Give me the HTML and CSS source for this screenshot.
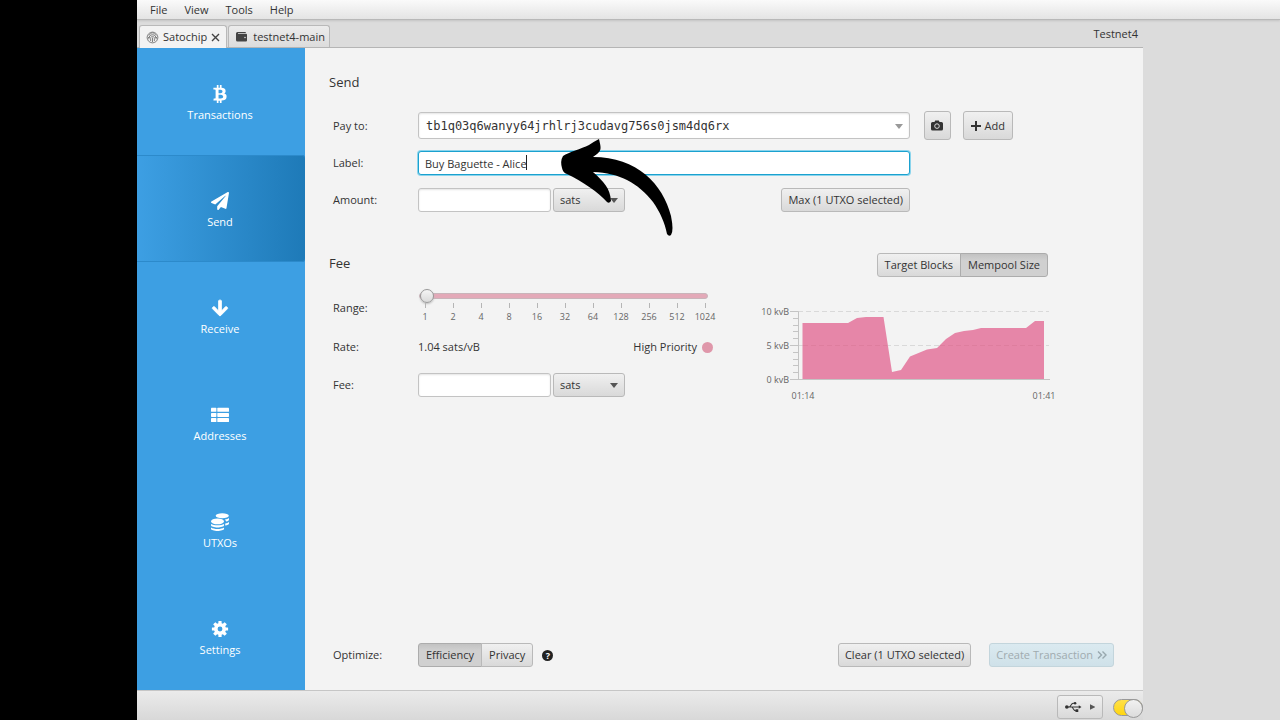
FILE: index.html
```html
<!DOCTYPE html>
<html lang="en">
<head>
<meta charset="utf-8">
<title>Satochip - Send</title>
<link rel="stylesheet" href="styles.css">
</head>
<body>
<div class="app">
  <nav class="menubar" aria-label="Menu">
    <button class="menu-item" type="button">File</button>
    <button class="menu-item" type="button">View</button>
    <button class="menu-item" type="button">Tools</button>
    <button class="menu-item" type="button">Help</button>
  </nav>
  <div class="window">
    <header class="tabs">
      <button class="tab active" type="button">
        <svg class="tab-icon" viewBox="0 0 14 14" aria-hidden="true"><g fill="none" stroke="#777" stroke-width="1"><circle cx="7" cy="7" r="5.8"/><path d="M3 5c1-2 3-3 4-3s3 1 4 3M3 9c0-3 1.500-5 4-5s4 2 4 5M5 11V8c0-3 4-3 4 0v3M7 7v5M2 7h2M10 7h2"/></g></svg>
        <span>Satochip</span>
        <svg class="close" viewBox="0 0 9 9" aria-hidden="true"><path d="M1 1l7 7M8 1L1 8" stroke="#444" stroke-width="1.400"/></svg>
      </button>
      <button class="tab" type="button">
        <svg class="wallet" viewBox="0 0 11 10" aria-hidden="true"><path fill="#444" d="M1.500 0H9a1 1 0 0 1 1 1H2v.7h8a1 1 0 0 1 1 1V8.500a1 1 0 0 1-1 1H1.500A1.500 1.500 0 0 1 0 8V1.500A1.500 1.500 0 0 1 1.500 0z"/><circle cx="9" cy="5.500" r=".8" fill="#ddd"/></svg>
        <span>testnet4-main</span>
      </button>
      <span class="network">Testnet4</span>
    </header>
    <div class="body">
      <nav class="sidebar" aria-label="Wallet">
        <button class="side" type="button">
          <svg viewBox="0 0 384 512" aria-hidden="true"><path d="M310.204 242.638c27.730-14.180 45.377-39.390 41.280-81.300-5.358-57.351-52.458-76.573-114.850-81.929V0h-48.528v77.203c-12.605 0-25.525.315-38.444.630V0h-48.530v79.409c-17.842.539-38.622.276-97.370 0v51.678c38.314-.678 58.417-3.140 63.023 21.427v217.429c-2.925 19.492-18.524 16.685-53.255 16.071L3.765 443.680c88.481 0 97.370.315 97.370.315V512h48.530v-67.060c13.234.315 26.154.315 38.444.315V512h48.528v-68.005c81.299-4.412 135.647-24.894 142.895-101.467 5.671-61.446-23.320-88.862-69.326-99.890zM150.608 134.553c27.415 0 113.126-8.507 113.126 48.528 0 54.515-85.710 48.212-113.126 48.212v-96.740zm0 251.776V279.821c32.772 0 133.127-9.138 133.127 53.255-.001 60.186-100.355 53.253-133.127 53.253z"/></svg>
          <span>Transactions</span>
        </button>
        <button class="side selected" type="button">
          <svg viewBox="0 0 512 512" aria-hidden="true"><path d="M476 3.200L12.500 270.600c-18.100 10.400-15.800 35.600 2.200 43.200L121 358.400l287.300-253.200c5.500-4.900 13.300 2.600 8.600 8.300L176 407v80.500c0 23.600 28.500 32.900 42.500 15.800L282 426l124.600 52.200c14.200 6 30.400-2.900 33-18.200l72-432C515 7.800 493.300-6.800 476 3.200z"/></svg>
          <span>Send</span>
        </button>
        <button class="side" type="button">
          <svg viewBox="0 0 448 512" aria-hidden="true"><path d="M413.100 222.500l22.200 22.200c9.400 9.400 9.400 24.600 0 33.900L241 473c-9.400 9.400-24.600 9.400-33.900 0L12.700 278.600c-9.400-9.400-9.400-24.600 0-33.900l22.200-22.200c9.500-9.500 25-9.300 34.300.4L184 343.400V56c0-13.300 10.700-24 24-24h32c13.300 0 24 10.700 24 24v287.400l114.800-120.500c9.300-9.800 24.800-10 34.300-.4z" stroke="#fff" stroke-width="24"/></svg>
          <span>Receive</span>
        </button>
        <button class="side" type="button">
          <svg viewBox="0 0 20 20" aria-hidden="true"><rect x="0" y="2" width="6" height="4.500" rx=".7"/><rect x="7" y="2" width="13" height="4.500" rx=".7"/><rect x="0" y="7.700" width="6" height="4.500" rx=".7"/><rect x="7" y="7.700" width="13" height="4.500" rx=".7"/><rect x="0" y="13.400" width="6" height="4.500" rx=".7"/><rect x="7" y="13.400" width="13" height="4.500" rx=".7"/></svg>
          <span>Addresses</span>
        </button>
        <button class="side" type="button">
          <svg viewBox="0 0 20 20" aria-hidden="true"><ellipse cx="12.500" cy="3" rx="7.300" ry="2.800"/><path d="M15.500 7.200c2-.3 3.500-.9 4.500-1.700v1.700c0 1-1.200 1.800-3 2.300zM15.800 11.700c1.800-.3 3.200-.9 4.200-1.700v1.600c0 1-1.700 1.900-4.200 2.300z"/><ellipse cx="7.200" cy="9.300" rx="7.200" ry="3.300"/><path d="M0 12.200c3 2 11.500 2 14.500 0v1.500c0 3.200-14.500 3.200-14.500 0zM0 16c3 2.200 11.500 2.200 14.500 0v1.600c0 3.200-14.500 3.200-14.500 0z"/></svg>
          <span>UTXOs</span>
        </button>
        <button class="side" type="button">
          <svg viewBox="0 0 20 20" aria-hidden="true"><circle cx="10" cy="10" r="4.700" fill="none" stroke="#fff" stroke-width="4"/><g id="teeth"><rect x="8.200" y="1" width="3.600" height="4" rx=".5"/><rect x="8.200" y="15" width="3.600" height="4" rx=".5"/><rect x="1" y="8.200" width="4" height="3.600" rx=".5"/><rect x="15" y="8.200" width="4" height="3.600" rx=".5"/></g><use href="#teeth" transform="rotate(45 10 10)"/></svg>
          <span>Settings</span>
        </button>
      </nav>
      <main class="pane">
        <section class="send">
          <h2>Send</h2>
          <div class="row payto">
            <label for="payto">Pay to:</label>
            <div class="combo wide">
              <input id="payto" class="field mono" type="text" value="tb1q03q6wanyy64jrhlrj3cudavg756s0jsm4dq6rx">
            </div>
            <button class="btn tall camera" type="button" aria-label="Scan QR code">
              <svg viewBox="0 0 12 11" width="12" height="11" aria-hidden="true"><path fill="#333" d="M1.500 2h2l.7-1.500h3.600L8.500 2h2A1.500 1.500 0 0 1 12 3.500v5.500a1.500 1.500 0 0 1-1.500 1.500h-9A1.500 1.500 0 0 1 0 9V3.500A1.500 1.500 0 0 1 1.500 2z"/><circle cx="6" cy="6.100" r="2.300" fill="none" stroke="#ddd"/></svg>
            </button>
            <button class="btn tall" type="button">
              <svg viewBox="0 0 10 10" width="10" height="10" aria-hidden="true"><path d="M5 0v10M0 5h10" stroke="#333" stroke-width="2"/></svg>
              Add
            </button>
          </div>
          <div class="row narrow">
            <label for="label">Label:</label>
            <div class="wide">
              <input id="label" class="field focused" type="text" value="Buy Baguette - Alice">
              <span class="caret"></span>
            </div>
          </div>
          <div class="row narrow">
            <label for="amount">Amount:</label>
            <input id="amount" class="field amount" type="text">
            <div class="combo unit"><select class="btn" aria-label="Amount unit"><option>sats</option><option>BTC</option></select></div>
            <button class="btn push" type="button">Max (1 UTXO selected)</button>
          </div>
          <svg class="pointer" viewBox="560 138 114 99" aria-hidden="true"><path d="M599 139C600 144 602 149 599 152C598 154 595 155 593 157C637 157 663 184 671 216Q674 231 671 235Q669 237 667 234C665 223 660 212 653 202C638 183 620 173 593 172C604 182 610 188 611 201Q609 204 607 202C598 192 583 182 567 174Q563 173 562 168Q560 161 563 156C569 152 581 149 589 145Q595 141 599 139Z"/></svg>
        </section>
        <section class="fee">
          <div class="fee-head">
            <h2>Fee</h2>
            <div class="group"><button class="btn" type="button">Target Blocks</button><button class="btn on" type="button" aria-pressed="true">Mempool Size</button></div>
          </div>
          <div class="fee-body">
            <div class="fee-form">
              <div class="row range-row">
                <label for="range">Range:</label>
                <div class="slider">
                  <input id="range" type="range" min="0" max="10" value="0">
                  <div class="ticks"><span>1</span><span>2</span><span>4</span><span>8</span><span>16</span><span>32</span><span>64</span><span>128</span><span>256</span><span>512</span><span>1024</span></div>
                </div>
              </div>
              <div class="row rate">
                <span class="caption">Rate:</span>
                <span>1.04 sats/vB</span>
                <span class="priority push">High Priority <i class="dot"></i></span>
              </div>
              <div class="row">
                <label for="fee">Fee:</label>
                <input id="fee" class="field amount" type="text">
                <div class="combo unit"><select class="btn" aria-label="Fee unit"><option>sats</option><option>BTC</option></select></div>
              </div>
            </div>
            <svg class="chart" viewBox="758 300 300 102" role="img" aria-label="Mempool size">
              <path d="M798 311.500H1049M798 345.500H1049" stroke="#d9d9d9" stroke-dasharray="5 3"/>
              <path fill="#e686a8" d="M802.500 379V323H848L857 318L866 317H883.500L892 372L901 370L910 356.500L927 349.500L937 348L946 339L955 333L964 331L973 330L981 328H1026L1035 321H1044V379Z"/>
              <path d="M803 345.500H887M940 345.500H1044" stroke="#de7e9e" stroke-dasharray="5 3"/>
              <path fill="none" stroke="#c4c4c4" d="M790 311.500h8.500V379.500M793 318.500h5M793 325.500h5M793 331.500h5M793 338.500h5M790 345.500h8M793 352.500h5M793 359.500h5M793 365.500h5M793 372.500h5M790 379.500H1050"/>
              <g class="axis"><text x="789" y="315" text-anchor="end">10 kvB</text><text x="789" y="349" text-anchor="end">5 kvB</text><text x="789" y="383" text-anchor="end">0 kvB</text><text x="803" y="399" text-anchor="middle">01:14</text><text x="1044" y="399" text-anchor="middle">01:41</text></g>
            </svg>
          </div>
        </section>
        <footer class="row actions">
          <span class="caption">Optimize:</span>
          <div class="group"><button class="btn on" type="button" aria-pressed="true">Efficiency</button><button class="btn" type="button">Privacy</button></div>
          <button class="help" type="button" aria-label="Help">?</button>
          <button class="btn push" type="button">Clear (1 UTXO selected)</button>
          <button class="btn create" type="button" disabled>Create Transaction
            <svg viewBox="0 0 10 8" width="10" height="8" aria-hidden="true"><path d="M1 .5L4.500 4L1 7.500M5.500 .5L9 4L5.500 7.500" fill="none" stroke="#98a8ae" stroke-width="1.400"/></svg>
          </button>
        </footer>
      </main>
    </div>
    <footer class="status">
      <button class="btn usb" type="button" aria-label="Connected device">
        <svg viewBox="0 0 18 12" width="18" height="12" aria-hidden="true"><g fill="none" stroke="#333" stroke-width="1.100"><path d="M2 6h14M4.500 6c2 0 2-4 4.500-4h2M7 6c2 0 2 4 4.500 4h1"/></g><circle cx="2" cy="6" r="2" fill="#333"/><circle cx="11" cy="2" r="1.400" fill="#333"/><path d="M15 4l3 2-3 2zM11.500 8.500h3v3h-3z" fill="#333"/></svg>
        <svg viewBox="0 0 6 6" width="6" height="6" aria-hidden="true"><path d="M0 0l6 3-6 3z" fill="#555"/></svg>
      </button>
      <input class="switch" type="checkbox" checked aria-label="Server connection">
    </footer>
  </div>
</div>
</body>
</html>
```
FILE: styles.css
```css
* { box-sizing: border-box; }
body {
  margin: 0;
  height: 100vh;
  padding-left: 137px;
  background: #000;
  color: #333;
  font: 11px/16px "Open Sans", "Noto Sans", sans-serif;
}
button, input, select { font: inherit; color: inherit; margin: 0; }
h2 { margin: 0; font-size: 13px; font-weight: 400; line-height: 20px; }

.app { display: flex; flex-direction: column; height: 100%; background: #dcdcdc; overflow: hidden; }
.menubar {
  flex: none;
  display: flex;
  gap: 17px;
  height: 20px;
  padding: 0 13px;
  border-bottom: 1px solid #b8b8b8;
  background: linear-gradient(#fafafa, #e4e4e4);
  box-shadow: 0 1px 2px #c4c4c4;
}
.menu-item { padding: 0; border: 0; background: none; line-height: 18px; }
.window { flex: 1; min-height: 0; display: flex; flex-direction: column; margin-right: 137px; }

.tabs { flex: none; display: flex; align-items: flex-end; gap: 1px; height: 28px; padding: 0 5px 0 2px; border-bottom: 1px solid #b5b5b5; }
.tab {
  display: flex;
  align-items: center;
  gap: 6px;
  height: 22px;
  padding: 0 4px 0 7px;
  border: 1px solid #b9b9b9;
  border-bottom: 0;
  border-radius: 3px 3px 0 0;
  background: linear-gradient(#ececec, #dcdcdc);
}
.tab.active { height: 23px; margin-bottom: -1px; padding: 0 6px; gap: 4px; background: #f3f3f3; }
.tab-icon { width: 13px; height: 13px; }
.close { width: 9px; height: 9px; }
.wallet { width: 11px; height: 10px; }
.network { margin-left: auto; align-self: center; }

.body { flex: 1; min-height: 0; display: flex; }
.sidebar { flex: none; display: flex; flex-direction: column; width: 168px; background: #3d9fe3; }
.side {
  flex: 1;
  display: flex;
  flex-direction: column;
  align-items: center;
  justify-content: center;
  gap: 4px;
  padding: 4px 2px 0 0;
  border: 0;
  background: none;
  color: #fff;
}
.side svg { width: 20px; height: 18px; fill: #fff; }
.side.selected { border-radius: 0 3px 3px 0; background: linear-gradient(90deg, #3d9fe3, #1e7ab8); box-shadow: inset 0 1px #2c8acb, inset 0 -1px #2c8acb; }

.pane { flex: 1; min-width: 0; display: flex; flex-direction: column; padding: 24px 29px 23px 24px; background: #f3f3f3; }
.row { display: flex; align-items: center; }
.row > label, .caption { flex: none; width: 85px; }
.send, .fee-form, .actions { padding-left: 4px; }
.send h2 { margin-left: -4px; }
.send { position: relative; padding-right: 101px; }
.payto { margin-top: 19px; }
.wide { flex: 1; min-width: 0; position: relative; }
.narrow { margin-top: 11px; padding-right: 103px; }
.narrow + .narrow { margin-top: 13px; }
.field {
  display: block;
  width: 100%;
  height: 24px;
  padding: 0 7px;
  border: 1px solid #c3c3c3;
  border-radius: 3px;
  outline: 0;
  background: #fff;
  box-shadow: inset 0 1px 2px #e4e4e4;
}
.mono { height: 27px; font-family: "DejaVu Sans Mono", monospace; font-size: 12px; }
.focused { padding: 0 6px; border-color: #1ba1cf; box-shadow: 0 0 0 1px #8bd4ec; }
.caret { position: absolute; top: 4px; left: 108px; width: 1px; height: 15px; background: #222; }
.amount { flex: none; width: 133px; }
.combo { position: relative; }
.combo::after {
  content: "";
  position: absolute;
  top: 50%;
  right: 7px;
  margin-top: -2px;
  border: 4px solid transparent;
  border-top: 5px solid #555;
  border-bottom: 0;
  pointer-events: none;
}
.combo.wide::after { border-top-color: #999; }
.unit { width: 72px; margin-left: 2px; }
.unit select { width: 100%; padding-left: 6px; appearance: none; }
.btn {
  display: inline-flex;
  align-items: center;
  justify-content: center;
  gap: 4px;
  height: 24px;
  padding: 0 7px;
  border: 1px solid #b9b9b9;
  border-radius: 3px;
  background: linear-gradient(#f0f0f0, #d9d9d9);
  white-space: nowrap;
}
.tall { height: 29px; }
.camera { width: 27px; margin: 0 12px 0 14px; padding: 0; }
.push { margin-left: auto; }
.btn.push { padding: 0 6px; }
.group { display: flex; }
.group .btn + .btn { margin-left: -1px; }
.group .btn:first-child { border-radius: 3px 0 0 3px; }
.group .btn:last-child { border-radius: 0 3px 3px 0; }
.btn.on { background: linear-gradient(#c2c2c2, #d0d0d0 30%, #d0d0d0); border-color: #acacac; }
.pointer { position: absolute; top: 66px; left: 231px; width: 114px; height: 99px; }

.fee { margin-top: 41px; }
.fee-head { display: flex; align-items: flex-start; justify-content: space-between; padding-right: 66px; }
.fee-body { display: flex; justify-content: space-between; align-items: flex-start; padding-right: 56px; }
.fee-form { flex: none; width: 387px; padding-top: 12px; }
.range-row > label { padding-top: 4px; }
.slider { flex: 1; min-width: 0; }
.slider input { display: block; width: 289px; height: 14px; margin: 0 0 0 1px; appearance: none; background: none; }
.slider input::-webkit-slider-runnable-track { height: 6px; border: 1px solid #c9b4ba; border-radius: 3px; background: #e3a9b8; }
.slider input::-webkit-slider-thumb {
  appearance: none;
  width: 14px;
  height: 14px;
  margin-top: -5px;
  border: 1px solid #999;
  border-radius: 50%;
  background: linear-gradient(#f5f5f5, #dadada);
  box-shadow: 0 1px 2px #bbb;
}
.ticks { display: flex; width: 308px; margin-left: -7px; color: #666; font-size: 9px; line-height: 12px; text-align: center; }
.ticks span { flex: 1; min-width: 0; }
.ticks span::before { content: ""; display: block; width: 1px; height: 5px; margin: 0 auto 3px; background: #b5b5b5; }
.rate { height: 16px; margin: 16px 0 18px; padding-right: 4px; }
.fee-form .rate { margin-right: -1px; }
.priority { display: flex; align-items: center; gap: 5px; }
.dot { width: 11px; height: 11px; border-radius: 50%; background: #df97aa; }
.chart { width: 300px; height: 102px; margin-top: 23px; }
.axis { fill: #666; font-size: 9px; }

.actions { margin-top: auto; }
.help { width: 11px; height: 11px; margin-left: 9px; padding: 0; border: 0; border-radius: 50%; background: #222; color: #fff; font-size: 9px; font-weight: 700; line-height: 11px; }
.create { margin-left: 18px; padding: 0 6px; border-color: #c3d5dc; background: linear-gradient(#dbeaf0, #cfe1e9); color: #a0abaf; }

.status { flex: none; display: flex; align-items: center; justify-content: flex-end; gap: 10px; height: 30px; padding-top: 3px; border-top: 1px solid #c6c6c6; background: linear-gradient(#ebebeb, #d8d8d8); }
.usb { width: 46px; gap: 8px; }
.switch { appearance: none; display: flex; width: 30px; height: 17px; border: 1px solid #999; border-radius: 9px; background: linear-gradient(#ffe04a, #ffd60f); }
.switch::after { content: ""; width: 17px; height: 17px; margin: -1px -1px 0 auto; border: 1px solid #999; border-radius: 50%; background: linear-gradient(#f1f1f1, #dcdcdc); }
```
